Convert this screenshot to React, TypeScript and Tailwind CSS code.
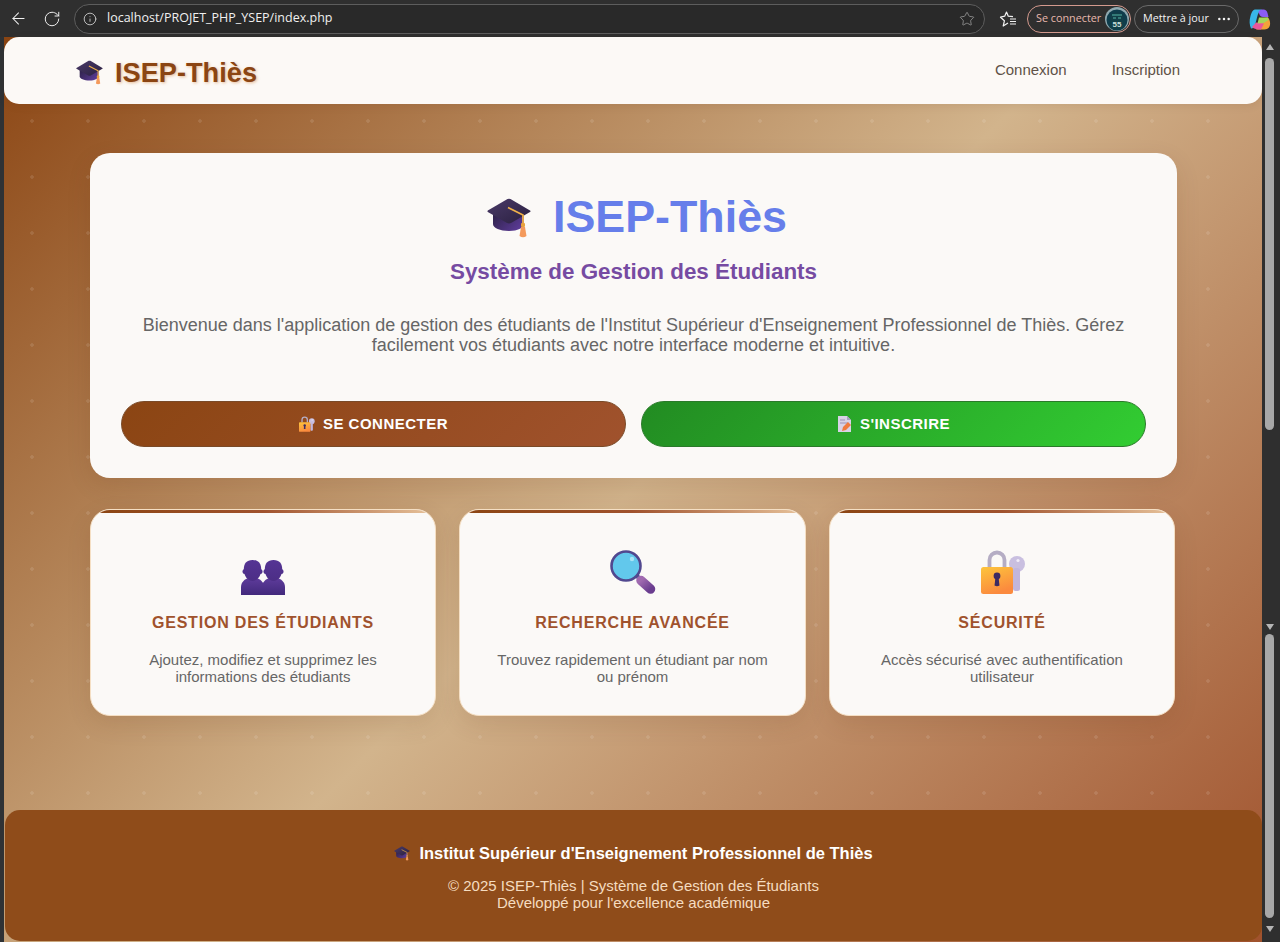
import { ArrowLeft, RotateCw, Info, Star, Ellipsis } from "lucide-react";

function Cap({ className }: { className: string }) {
  return (
    <svg viewBox="0 0 44 40" className={className}>
      <defs>
        <linearGradient id="capTop" x1="0" y1="0" x2="1" y2="1">
          <stop offset="0" stopColor="#4a3a68" />
          <stop offset="1" stopColor="#2a2040" />
        </linearGradient>
        <linearGradient id="capBase" x1="0" y1="0" x2="1" y2="0.6">
          <stop offset="0" stopColor="#2c2145" />
          <stop offset="1" stopColor="#5a3a94" />
        </linearGradient>
      </defs>
      <path d="M6 14v12c0 4 7 7 16 7s14-3 15-7V14z" fill="url(#capBase)" />
      <path d="M20.500 1 .8 12.500q-.8.800 0 1.500L20 25q2 .8 4 0l19-11q1-.8 0-1.500L23.500 1q-1.500-.7-3 0z" fill="url(#capTop)" />
      <path d="M21 9.500 36 17v10" fill="none" stroke="#eeb04a" strokeWidth="1.800" strokeLinejoin="round" />
      <rect x="34" y="25" width="4" height="4" rx="1" fill="#e8a23e" />
      <path d="M34 29h4l1.500 9q-3.500 2.600-7 0z" fill="#f49a5c" />
    </svg>
  );
}

function Busts() {
  const one = (dx: number) => (
    <g transform={`translate(${dx} 0)`}>
      <path d="M0 35v-8c0-5 4-8 8-9.500h7c4 1.500 8 4.500 8 9.500v8z" fill="url(#bustBody)" />
      <rect x="1.500" y="9" width="20" height="5" rx="2.500" fill="url(#bustHead)" />
      <path d="M11.500 0C5.500 0 2.800 3.500 2.800 9.500c0 6.500 4 11.500 8.700 11.500s8.700-5 8.700-11.500C20.200 3.500 17.500 0 11.500 0z" fill="url(#bustHead)" />
    </g>
  );
  return (
    <svg viewBox="0 0 44 35" className="h-[35px] w-[44px]">
      <defs>
        <linearGradient id="bustHead" x1="0" y1="0" x2="0" y2="1">
          <stop offset="0" stopColor="#553494" />
          <stop offset="1" stopColor="#4c2e86" />
        </linearGradient>
        <linearGradient id="bustBody" x1="0" y1="0" x2="0" y2="1">
          <stop offset="0" stopColor="#5f3c9c" />
          <stop offset="1" stopColor="#42297c" />
        </linearGradient>
      </defs>
      {one(21)}
      {one(0)}
    </svg>
  );
}

function Magnifier() {
  return (
    <svg viewBox="0 0 46 44" className="h-[44px] w-[46px]">
      <defs>
        <linearGradient id="mh" x1="0" y1="0" x2="1" y2="1">
          <stop offset="0" stopColor="#a06ab0" />
          <stop offset="1" stopColor="#6a3d8f" />
        </linearGradient>
      </defs>
      <path d="M27 29l3-3" stroke="#4f4a92" strokeWidth="5" />
      <path d="M31 30.500 40.500 39" stroke="url(#mh)" strokeWidth="9.500" strokeLinecap="round" />
      <circle cx="16" cy="16" r="14.500" fill="#62c8ec" stroke="#51488f" strokeWidth="2.600" />
      <circle cx="22" cy="9" r="2.200" fill="#a9e4f6" />
    </svg>
  );
}

function LockKey({ className }: { className: string }) {
  return (
    <svg viewBox="0 0 45 44" className={className}>
      <defs>
        <linearGradient id="lb" x1="0" y1="0" x2="0.400" y2="1">
          <stop offset="0" stopColor="#fdc53c" />
          <stop offset="1" stopColor="#fb8a3e" />
        </linearGradient>
      </defs>
      <path d="M8.500 18V10a7.500 7.500 0 0 1 15 0v8" fill="none" stroke="#b5adc4" strokeWidth="3.800" />
      <circle cx="36" cy="14" r="8" fill="#c9bfe0" />
      <circle cx="37" cy="10.500" r="1.600" fill="#f1edf8" />
      <rect x="32" y="18" width="7" height="23" rx="2.500" fill="#c2b6dc" />
      <rect x="0" y="17" width="32" height="27" rx="2.500" fill="url(#lb)" />
      <circle cx="16" cy="26" r="3.400" fill="#3d2a62" />
      <path d="M14.500 27h3l1 8.500q-2.500 1.500-5 0z" fill="#3d2a62" />
    </svg>
  );
}

function FileIcon() {
  return (
    <svg viewBox="0 0 15 16" className="h-[16px] w-[15px]">
      <path d="M1 0h9l4 4v12H1z" fill="#d8d2e6" />
      <path d="M10 0l4 4h-4z" fill="#a89fc0" />
      <path d="M3 4h5M3 7h8" stroke="#9c92b4" strokeWidth="1" />
      <path d="M5 15l1-4 5-5 3 3-5 5z" fill="#f07a3e" />
    </svg>
  );
}

function Favorites() {
  return (
    <svg viewBox="0 0 18 18" className="h-[18px] w-[18px]" fill="none" stroke="#f2f2f2" strokeWidth="1.200" strokeLinejoin="round">
      <path d="M9 13 4.200 16l1.200-5.200L1.500 7.200l4.200-1L7.500 2l1.800 4.200 4.700.4" />
      <path d="M11 9h6M11 11.500h6M11 14h6" />
    </svg>
  );
}

function Copilot() {
  return (
    <svg viewBox="0 0 22 22" className="h-[22px] w-[22px]">
      <path d="M7 1.500h6c-2.500 1-4 3.500-5 8l-2 8c-.5 2-2 3-4 3C.5 17 0 13 1.500 8S4 1.500 7 1.500z" fill="#38b6e8" />
      <path d="M13 1.500h1.500c2 0 3.500 1.500 4 3.500l1 4H14c-2 0-3-1-3.500-2.500L9.500 4C10 2.500 11.500 1.500 13 1.500z" fill="#8b5cf6" />
      <path d="M19 9.500c2.500 3 3 8 .5 10.500-1.500 1.500-3 1.500-6.500 1.500H7c2-1 3-3 3.500-5l1-4c.3-1.500 1.500-2.500 3-2.500z" fill="#f2a33a" />
      <path d="M3 19c2 2 5 2.500 9 2.500l3-6-8-1z" fill="#e9559a" />
      <path d="M10 9.500h9l.5 2.500-5 3-6 .5z" fill="#a3d65c" />
    </svg>
  );
}

function Avatar() {
  return (
    <svg viewBox="0 0 24 24" className="h-[24px] w-[24px] shrink-0">
      <circle cx="12" cy="12" r="12" fill="#8fa9b0" />
      <circle cx="12" cy="13" r="10.500" fill="#0f3d4c" />
      <path d="M6 8q6-5 12 0l1 13q-7 3-14 0z" fill="#123f48" />
      <path d="M7 8h10M8 11h3M13 11h3" stroke="#55b6a6" strokeWidth="1.200" />
      <text x="12" y="20" textAnchor="middle" fontSize="8" fontWeight="700" fill="#c9ded8" fontFamily="Liberation Sans">55</text>
    </svg>
  );
}

function BrowserBar() {
  return (
    <header className="flex h-[37px] shrink-0 items-center bg-[#2f2f2f] font-['Open_Sans',sans-serif] text-[#f2f2f2]">
      <ArrowLeft className="ml-[9px] h-[19px] w-[19px]" strokeWidth={1.300} />
      <RotateCw className="ml-[15px] h-[18px] w-[18px]" strokeWidth={1.300} />
      <div className="ml-[13px] flex h-[30px] w-[911px] items-center rounded-full border border-[#5d5d5d] bg-[#292929] pl-[8px] pr-[9px]">
        <Info className="h-[14px] w-[14px] text-[#cfcfcf]" strokeWidth={1.500} />
        <span className="ml-[10px] text-[12.500px] text-[#f0f0f0]">localhost/PROJET_PHP_YSEP/index.php</span>
        <Star className="ml-auto h-[16px] w-[16px] text-[#9a9a9a]" strokeWidth={1.200} />
      </div>
      <div className="ml-[14px] flex">
        <Favorites />
      </div>
      <div className="ml-[10px] flex h-[28px] w-[104px] items-center justify-between rounded-full border border-[#d49a8e] pl-[8px] pr-[1px]">
        <span className="text-[10.800px] text-[#e9b9ae]">Se connecter</span>
        <Avatar />
      </div>
      <div className="ml-[3px] flex h-[28px] w-[105px] items-center justify-between rounded-full border border-[#6a6a6a] pl-[8px] pr-[6px]">
        <span className="text-[10.800px] text-[#f4f4f4]">Mettre à jour</span>
        <Ellipsis className="h-[16px] w-[16px]" strokeWidth={1.800} />
      </div>
      <div className="ml-[10px] flex">
        <Copilot />
      </div>
    </header>
  );
}

function Scrollbar() {
  return (
    <aside className="flex w-[18px] shrink-0 flex-col items-center bg-[#2f2f2f] pl-[2px] pr-[5px]">
      <div className="mt-[7px] h-0 w-0 border-x-[4px] border-b-[6px] border-x-transparent border-b-[#b5b5b5]" />
      <div className="mt-[8px] h-[372px] w-[9px] rounded-full bg-[#a8a8a8]" />
      <div className="mt-[194px] h-0 w-0 border-x-[4px] border-t-[6px] border-x-transparent border-t-[#b5b5b5]" />
      <div className="mt-[4px] h-[284px] w-[9px] rounded-full bg-[#a8a8a8]" />
      <div className="mt-[8px] h-0 w-0 border-x-[4px] border-t-[6px] border-x-transparent border-t-[#b5b5b5]" />
    </aside>
  );
}

const features = [
  { icon: <Busts />, box: "pt-[50px]", gap: "mt-[19px]", title: "Gestion des étudiants", text: "Ajoutez, modifiez et supprimez les informations des étudiants" },
  { icon: <Magnifier />, box: "pt-[40px]", gap: "mt-[20px]", title: "Recherche avancée", text: "Trouvez rapidement un étudiant par nom ou prénom" },
  { icon: <div className="pl-[3px]"><LockKey className="h-[44px] w-[45px]" /></div>, box: "pt-[40px]", gap: "mt-[20px]", title: "Sécurité", text: "Accès sécurisé avec authentification utilisateur" },
];

function FeatureCard({ icon, box, gap, title, text }: (typeof features)[number]) {
  return (
    <article className={`relative flex h-[207px] flex-col items-center overflow-hidden rounded-[20px] border border-[#f5dfc4] bg-[#fbf9f7] px-[30px] text-center shadow-[0_8px_24px_rgba(90,45,15,0.12)] ${box}`}>
      <div className="absolute inset-x-0 top-0 h-[3px] bg-[linear-gradient(90deg,#8b4513,#a0522d,#e8c49c)]" />
      {icon}
      <h3 className={`text-[16px] font-bold uppercase leading-[18px] tracking-[0.8px] text-[#a0522d] ${gap}`}>{title}</h3>
      <p className="mt-[19px] text-[15px] leading-[17px] text-[#666666]">{text}</p>
    </article>
  );
}

export default function App() {
  return (
    <div className="flex h-[942px] w-[1280px] flex-col overflow-hidden bg-[#2f3235] font-['Liberation_Sans',Arial,sans-serif]">
      <BrowserBar />
      <div className="flex min-h-0 flex-1 pl-[4px]">
        <div className="flex min-w-0 flex-1 flex-col justify-between bg-[radial-gradient(circle,rgba(255,255,255,0.11)_1.500px,transparent_2px),linear-gradient(135deg,#8b4513_0%,#d2b48c_50%,#a0522d_100%)] bg-[size:56px_56px,100%_100%]">
          <div>
            <nav className="flex h-[67px] items-center justify-between rounded-[15px] bg-[#fcf9f6] pl-[72px] pr-[82px] shadow-[0_2px_8px_rgba(90,45,15,0.1)]">
              <div className="flex items-center">
                <Cap className="mt-[4px] h-[25px] w-[27px]" />
                <span className="ml-[12px] mt-[3px] text-[27.200px] font-bold leading-[33px] text-[#8b4513] [text-shadow:1px_1px_3px_rgba(210,130,60,0.5)]">ISEP-Thiès</span>
              </div>
              <div className="flex gap-[45px] text-[15px] text-[#5f5247]">
                <a>Connexion</a>
                <a>Inscription</a>
              </div>
            </nav>
            <main className="pl-[86px] pt-[49px]">
              <section className="w-[1087px] rounded-[20px] bg-[#fbf9f7] px-[31px] pb-[31px] pt-[36px] text-center shadow-[0_8px_24px_rgba(90,45,15,0.12)]">
                <h1 className="flex items-center justify-center text-[44.800px] font-bold leading-[55px] text-[#667eea]">
                  <Cap className="mr-[22px] ml-[7px] mt-[3px] h-[40px] w-[44px]" />
                  <span>ISEP-Thiès</span>
                </h1>
                <h2 className="mt-[14px] text-[22.400px] font-bold leading-[28px] text-[#764ba2]">Système de Gestion des Étudiants</h2>
                <p className="mt-[29px] text-[18px] leading-[20px] text-[#666666]">
                  Bienvenue dans l'application de gestion des étudiants de l'Institut Supérieur d'Enseignement Professionnel de Thiès. Gérez facilement vos étudiants avec notre interface moderne et intuitive.
                </p>
                <div className="mt-[46px] grid grid-cols-2 gap-[15px]">
                  <button className="flex h-[46px] items-center justify-center gap-[8px] rounded-[25px] border border-[#7a4a28] bg-[linear-gradient(135deg,#8b4513,#a0522d)] text-[15px] font-bold uppercase tracking-[0.5px] text-white">
                    <LockKey className="h-[16px] w-[16px]" />
                    Se connecter
                  </button>
                  <button className="flex h-[46px] items-center justify-center gap-[8px] rounded-[25px] border border-[#2a7a2a] bg-[linear-gradient(135deg,#228b22,#32cd32)] text-[15px] font-bold uppercase tracking-[0.5px] text-white">
                    <FileIcon />
                    S'inscrire
                  </button>
                </div>
              </section>
              <section className="mt-[31px] grid grid-cols-[346px_347px_346px] gap-[23px]">
                {features.map((f) => (
                  <FeatureCard key={f.title} {...f} />
                ))}
              </section>
            </main>
          </div>
          <footer className="mb-[1px] ml-[1px] flex h-[131px] flex-col items-center rounded-[15px] bg-[#8f4c1a] pt-[33px] text-center">
            <div className="flex items-center text-[16.500px] font-bold leading-[20px] text-white">
              <Cap className="mr-[9px] h-[15px] w-[16px]" />
              Institut Supérieur d'Enseignement Professionnel de Thiès
            </div>
            <p className="mt-[14px] text-[15px] leading-[17px] text-[#f5dcc0]">
              © 2025 ISEP-Thiès | Système de Gestion des Étudiants
              <br />
              Développé pour l'excellence académique
            </p>
          </footer>
        </div>
        <Scrollbar />
      </div>
    </div>
  );
}
